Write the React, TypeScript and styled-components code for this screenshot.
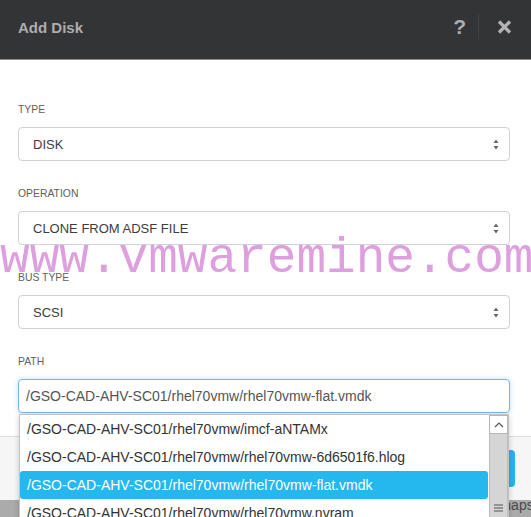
import React from "react";
import styled, { createGlobalStyle } from "styled-components";

const GlobalStyle = createGlobalStyle`
  html, body { margin: 0; padding: 0; }
  body { font-family: "Liberation Sans", Arial, sans-serif; background: #ababab; }
  * { box-sizing: border-box; }
`;

const Page = styled.div`
  position: relative;
  width: 531px;
  height: 517px;
  overflow: hidden;
  background: #ababab;
  display: flex;
  flex-direction: column;
`;

const Modal = styled.div`
  background: #fff;
  display: flex;
  flex-direction: column;
`;

const Header = styled.div`
  height: 60px;
  background: #333436;
  border-bottom: 1px solid #8e8e8e;
  padding: 0 19px 6px 18px;
  display: flex;
  align-items: center;
  justify-content: space-between;
`;

const Title = styled.div`
  color: #adadad;
  font-size: 15px;
  font-weight: bold;
  margin-top: 1px;
`;

const HeaderActions = styled.div`
  display: flex;
  align-items: center;
`;

const HelpButton = styled.span`
  color: #adadad;
  font-size: 21px;
  font-weight: bold;
  line-height: 1;
  margin-top: -1px;
`;

const Divider = styled.span`
  width: 1px;
  height: 25px;
  background: #404144;
  margin: 0 18px 0 12px;
`;

const CloseIcon = styled.svg`
  display: block;
  margin-top: 1px;
`;

const Body = styled.div`
  padding: 44px 21px 23px 18px;
  display: flex;
  flex-direction: column;
  gap: 27px;
`;

const Field = styled.div`
  display: flex;
  flex-direction: column;
`;

const Label = styled.div`
  font-size: 10.4px;
  line-height: 12px;
  height: 12px;
  color: #5e5e5e;
  margin-bottom: 11px;
`;

const SelectBox = styled.div`
  height: 34px;
  border: 1px solid #cfd2d6;
  border-radius: 4px;
  padding: 0 10px 0 14px;
  display: flex;
  align-items: center;
  justify-content: space-between;
  font-size: 13px;
  color: #3d3d3d;
`;

const TextInput = styled.input`
  height: 34px;
  width: 100%;
  border: 1px solid #7fb6e6;
  border-radius: 4px;
  padding: 0 7px;
  font-family: "Liberation Sans", Arial, sans-serif;
  font-size: 14px;
  color: #555;
  outline: none;
  box-shadow: 0 0 5px rgba(102, 175, 233, 0.45);
`;

const Footer = styled.div`
  height: 64px;
  border-top: 1px solid #dddddd;
  background: #f6f6f6;
  padding: 13px 16px 0 0;
  display: flex;
  justify-content: flex-end;
  align-items: flex-start;
`;

const PrimaryButton = styled.button`
  height: 37px;
  width: 90px;
  border: none;
  border-radius: 4px;
  background: #23b6ec;
  color: #fff;
  font-family: "Liberation Sans", Arial, sans-serif;
  font-size: 14px;
`;

const BackdropStrip = styled.div`
  flex: 1;
  background: #ababab;
  padding-left: 494px;
  font-size: 14px;
  line-height: 10px;
  color: #4a4a4a;
  white-space: nowrap;
`;

const Watermark = styled.div`
  position: absolute;
  top: 235px;
  left: 0;
  font-family: "Liberation Mono", "Courier New", monospace;
  font-size: 49.4px;
  line-height: 49px;
  color: #dd9fdd;
  white-space: nowrap;
  pointer-events: none;
`;

const Dropdown = styled.div`
  position: absolute;
  top: 414px;
  left: 19px;
  width: 490px;
  height: 110px;
  background: #fff;
  border: 1px solid #c4c4c4;
  box-shadow: 0 2px 6px rgba(0, 0, 0, 0.2);
  display: flex;
`;

const Options = styled.div`
  flex: 1;
  display: flex;
  flex-direction: column;
`;

const Option = styled.div<{ $active?: boolean }>`
  height: 28px;
  line-height: 28px;
  padding-left: 7px;
  margin-right: 1px;
  font-size: 14px;
  white-space: nowrap;
  border-radius: 3px;
  color: ${(p) => (p.$active ? "#fff" : "#333")};
  background: ${(p) => (p.$active ? "#25b8ee" : "transparent")};
`;

const Scrollbar = styled.div`
  width: 19px;
  display: flex;
  flex-direction: column;
`;

const ScrollUp = styled.div`
  height: 19px;
  background: #fff;
  border: 1px solid #b5b5b5;
  display: flex;
  align-items: center;
  justify-content: center;
`;

const ScrollThumb = styled.div`
  flex: 1;
  background: #d5d5d5;
  border-left: 1px solid #bdbdbd;
  border-right: 1px solid #bdbdbd;
  display: flex;
  justify-content: center;
  padding-top: 70px;
`;

const Arrows = () => (
  <svg width="6" height="11" viewBox="0 0 6 11">
    <path d="M3 0.5 L5.5 4 L0.5 4 Z" fill="#666" />
    <path d="M3 10.5 L5.5 7 L0.5 7 Z" fill="#666" />
  </svg>
);

const fields = [
  { label: "TYPE", value: "DISK" },
  { label: "OPERATION", value: "CLONE FROM ADSF FILE" },
  { label: "BUS TYPE", value: "SCSI" },
];

const options = [
  "/GSO-CAD-AHV-SC01/rhel70vmw/imcf-aNTAMx",
  "/GSO-CAD-AHV-SC01/rhel70vmw/rhel70vmw-6d6501f6.hlog",
  "/GSO-CAD-AHV-SC01/rhel70vmw/rhel70vmw-flat.vmdk",
  "/GSO-CAD-AHV-SC01/rhel70vmw/rhel70vmw.nvram",
];

export default function App() {
  return (
    <>
      <GlobalStyle />
      <Page>
        <Modal>
          <Header>
            <Title>Add Disk</Title>
            <HeaderActions>
              <HelpButton>?</HelpButton>
              <Divider />
              <CloseIcon width="15" height="14" viewBox="0 0 15 14">
                <path d="M2 1.5 L13 12.5 M13 1.5 L2 12.5" stroke="#b3b3b3" strokeWidth="3.2" />
              </CloseIcon>
            </HeaderActions>
          </Header>
          <Body>
            {fields.map((f) => (
              <Field key={f.label}>
                <Label>{f.label}</Label>
                <SelectBox>
                  <span>{f.value}</span>
                  <Arrows />
                </SelectBox>
              </Field>
            ))}
            <Field>
              <Label>PATH</Label>
              <TextInput readOnly value="/GSO-CAD-AHV-SC01/rhel70vmw/rhel70vmw-flat.vmdk" />
            </Field>
          </Body>
          <Footer>
            <PrimaryButton>Add</PrimaryButton>
          </Footer>
        </Modal>
        <BackdropStrip>Snaps</BackdropStrip>
        <Watermark>www.vmwaremine.com</Watermark>
        <Dropdown>
          <Options>
            {options.map((o, i) => (
              <Option key={o} $active={i === 2}>
                {o}
              </Option>
            ))}
          </Options>
          <Scrollbar>
            <ScrollUp>
              <svg width="10" height="6" viewBox="0 0 10 6">
                <polyline points="1,5 5,1 9,5" fill="none" stroke="#555" strokeWidth="1.2" />
              </svg>
            </ScrollUp>
            <ScrollThumb>
              <svg width="9" height="8" viewBox="0 0 9 8">
                <path d="M0 1 H9 M0 4 H9 M0 7 H9" stroke="#555" strokeWidth="1.2" />
              </svg>
            </ScrollThumb>
          </Scrollbar>
        </Dropdown>
      </Page>
    </>
  );
}
